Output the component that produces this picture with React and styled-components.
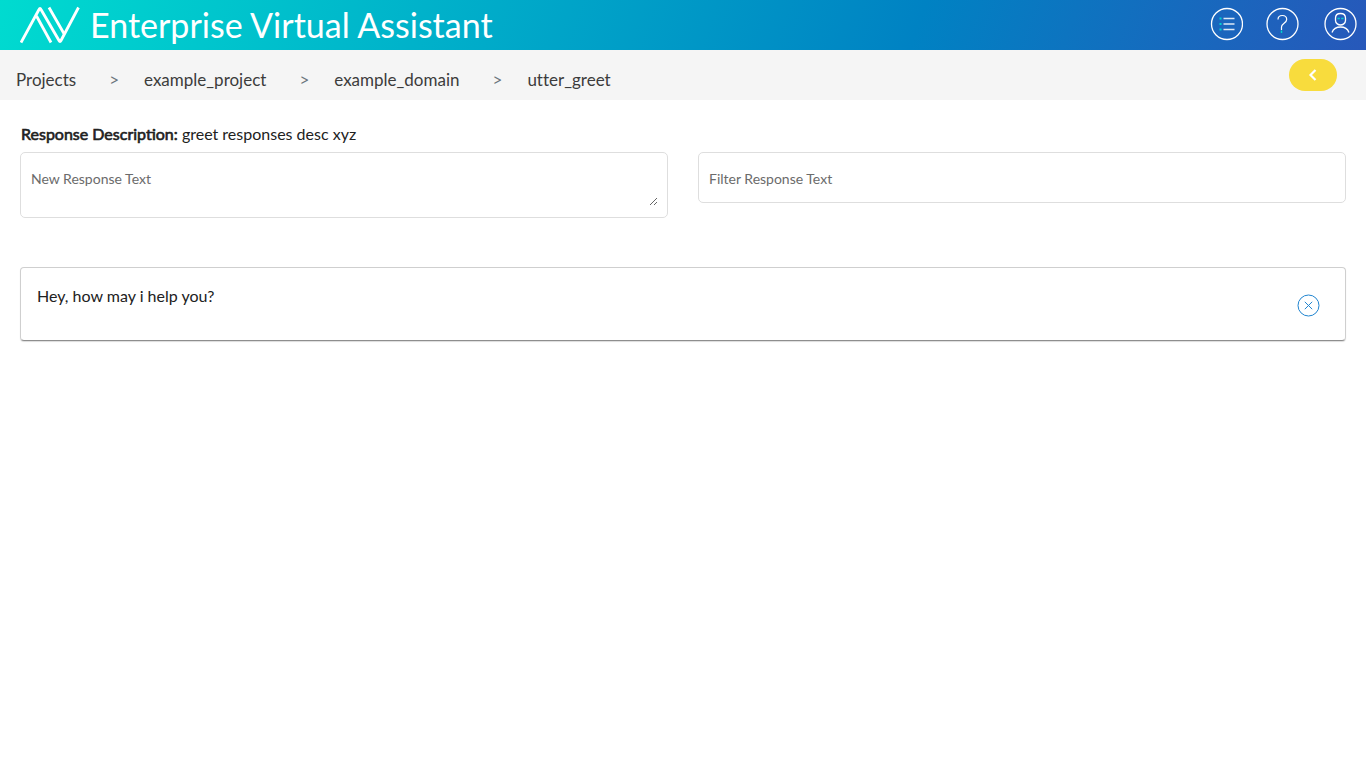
import React from "react";
import styled, { createGlobalStyle } from "styled-components";

const GlobalStyle = createGlobalStyle`
  *, *::before, *::after { box-sizing: border-box; }
  body {
    margin: 0;
    background: #fff;
    color: #212121;
    font-family: Lato, "Liberation Sans", sans-serif;
    font-size: 16px;
    line-height: 24px;
  }
`;

const Header = styled.header`
  display: flex;
  align-items: center;
  height: 50px;
  padding: 0 9px 0 20px;
  color: #fff;
  background: linear-gradient(110deg, #00dbd0 0%, #0082c3 67%, #2758ba 100%);
`;

const Title = styled.h1`
  flex: 1;
  margin: 0 0 0 10px;
  font-size: 34px;
  font-weight: 400;
  line-height: 50px;
`;

const HeaderActions = styled.nav`
  display: flex;
  gap: 23px;
  padding-bottom: 2px;
`;

const IconButton = styled.button`
  display: flex;
  padding: 0;
  border: 0;
  background: none;
  color: inherit;
  cursor: pointer;
`;

const LineIcon = styled.svg`
  display: block;
  fill: none;
  stroke: currentColor;
`;

const SubHeader = styled.div`
  display: flex;
  align-items: center;
  justify-content: space-between;
  height: 50px;
  padding: 0 29px 0 16px;
  background: #f5f5f5;
`;

const Crumbs = styled.ol`
  display: flex;
  margin: 0;
  padding: 10px 0 0;
  list-style: none;
  font-size: 17px;
  font-variant-ligatures: none;
`;

const Crumb = styled.li`
  display: flex;

  & + &::before {
    content: ">";
    margin: 0 25px 0 33px;
    color: #6c757d;
  }
`;

const CrumbLink = styled.a`
  color: #3c3c3c;
  text-decoration: none;
`;

const BackButton = styled.button`
  display: flex;
  align-items: center;
  justify-content: center;
  width: 48px;
  height: 32px;
  padding: 0;
  border: 0;
  border-radius: 16px;
  background: #f8dc3d;
  color: #fff;
  cursor: pointer;
`;

const Main = styled.main`
  padding: 22px 20px;
`;

const Description = styled.p`
  margin: 0 0 6px 1px;
`;

const Label = styled.span`
  -webkit-text-stroke: 0.04em currentColor;
`;

const Fields = styled.div`
  display: grid;
  grid-template-columns: 1fr 1fr;
  align-items: start;
  gap: 30px;
`;

const Field = styled.div`
  display: flex;
  padding: ${({ $tall }) => ($tall ? "16px 9px 11px" : "0 9px")};
  border: 1px solid #dedede;
  border-radius: 5px;
`;

const fieldText = `
  display: block;
  width: 100%;
  padding: 0 1px;
  border: 0;
  outline: 0;
  background: none;
  color: #212121;
  font-family: inherit;
  font-size: 14px;

  &::placeholder { color: #6b6b6b; opacity: 1; }
`;

const TextArea = styled.textarea`
  ${fieldText}
  height: 37px;
  line-height: 20px;
  resize: vertical;
`;

const TextInput = styled.input`
  ${fieldText}
  height: 49px;
  padding: 2px 0 0 1px;
`;

const Responses = styled.ul`
  margin: 49px 0 0;
  padding: 0;
  list-style: none;
`;

const Response = styled.li`
  display: flex;
  align-items: center;
  justify-content: space-between;
  height: 74px;
  padding: 0 25px 0 16px;
  border: 1px solid #cfcfcf;
  border-bottom-color: #8e8e8e;
  border-radius: 4px;
  box-shadow: 0 1px 1px rgba(0, 0, 0, 0.14);
`;

const ResponseText = styled.p`
  margin: 0 0 16px;
`;

const DeleteButton = styled(IconButton)`
  padding-top: 3px;
  color: #2185d0;
`;

const crumbs = ["Projects", "example_project", "example_domain", "utter_greet"];

export default function App() {
  return (
    <>
      <GlobalStyle />
      <Header>
        <LineIcon width="60" height="50" viewBox="0 0 60 50" strokeWidth="2.8" aria-hidden="true">
          <path d="M1 42.500 19 9.500Q20 7.500 21 9.500L39 40.500Q40 42.500 41 40.500L58.500 7.500" />
          <path d="M16.500 16 31 42.500M29 7.500 44.500 34.500" />
        </LineIcon>
        <Title>Enterprise Virtual Assistant</Title>
        <HeaderActions aria-label="Main">
          <IconButton type="button" aria-label="Menu">
            <LineIcon width="34" height="34" viewBox="0 0 34 34">
              <circle cx="18" cy="17" r="15.500" strokeWidth="1.3" />
              <path d="M14.500 11.500h11M14.500 17h11M14.500 22.500h11" strokeWidth="1.3" opacity=".85" />
              <path d="M10.500 11.500h2M10.500 17h2M10.500 22.500h2" strokeWidth="2" stroke="#00d3cf" />
            </LineIcon>
          </IconButton>
          <IconButton type="button" aria-label="Help">
            <LineIcon width="34" height="34" viewBox="0 0 34 34">
              <circle cx="16.500" cy="17" r="15.500" strokeWidth="1.3" />
              <path d="M12 12.500C12 9.800 13.800 8.500 16.300 8.500S20.700 10 20.700 12.500C20.700 16.200 15.500 16.300 15.500 20V23" strokeWidth="1.2" />
              <path d="M15.500 23.500v2.500" strokeWidth="1.400" stroke="#00d3cf" />
            </LineIcon>
          </IconButton>
          <IconButton type="button" aria-label="Account">
            <LineIcon width="34" height="34" viewBox="0 0 34 34">
              <circle cx="17.500" cy="17" r="15.500" strokeWidth="1.3" />
              <path d="M12.500 11C12.500 8 14.500 6.500 17.500 6.500S22.500 8 22.500 11V13.500C22.500 16.500 19.500 18 17.500 18S12.500 16.500 12.500 13.500Z" strokeWidth="1.3" />
              <path d="M9 25.500C10.500 21.500 13.500 20 17.500 20S24.500 21.500 26 25.500" strokeWidth="1.3" />
              <path d="M14.500 11.500h2.300M18.200 11.500h2.300" strokeWidth="1.400" stroke="#00d3cf" />
            </LineIcon>
          </IconButton>
        </HeaderActions>
      </Header>
      <SubHeader>
        <nav aria-label="Breadcrumb">
          <Crumbs>
            {crumbs.map((name) => (
              <Crumb key={name}>
                <CrumbLink href="#">{name}</CrumbLink>
              </Crumb>
            ))}
          </Crumbs>
        </nav>
        <BackButton type="button" aria-label="Back">
          <LineIcon width="12" height="14" viewBox="0 0 12 14" strokeWidth="2.2">
            <path d="M8.500 2 3.500 7l5 5" />
          </LineIcon>
        </BackButton>
      </SubHeader>
      <Main>
        <Description>
          <Label>Response Description:</Label> greet responses desc xyz
        </Description>
        <Fields>
          <Field $tall>
            <TextArea aria-label="New Response Text" placeholder="New Response Text" />
          </Field>
          <Field>
            <TextInput type="text" aria-label="Filter Response Text" placeholder="Filter Response Text" />
          </Field>
        </Fields>
        <Responses>
          <Response>
            <ResponseText>Hey, how may i help you?</ResponseText>
            <DeleteButton type="button" aria-label="Delete response">
              <LineIcon width="23" height="23" viewBox="0 0 23 23" strokeWidth="1">
                <circle cx="11.500" cy="11.500" r="10.500" />
                <path d="m7.800 7.800 7.400 7.400M15.200 7.800l-7.400 7.400" />
              </LineIcon>
            </DeleteButton>
          </Response>
        </Responses>
      </Main>
    </>
  );
}
